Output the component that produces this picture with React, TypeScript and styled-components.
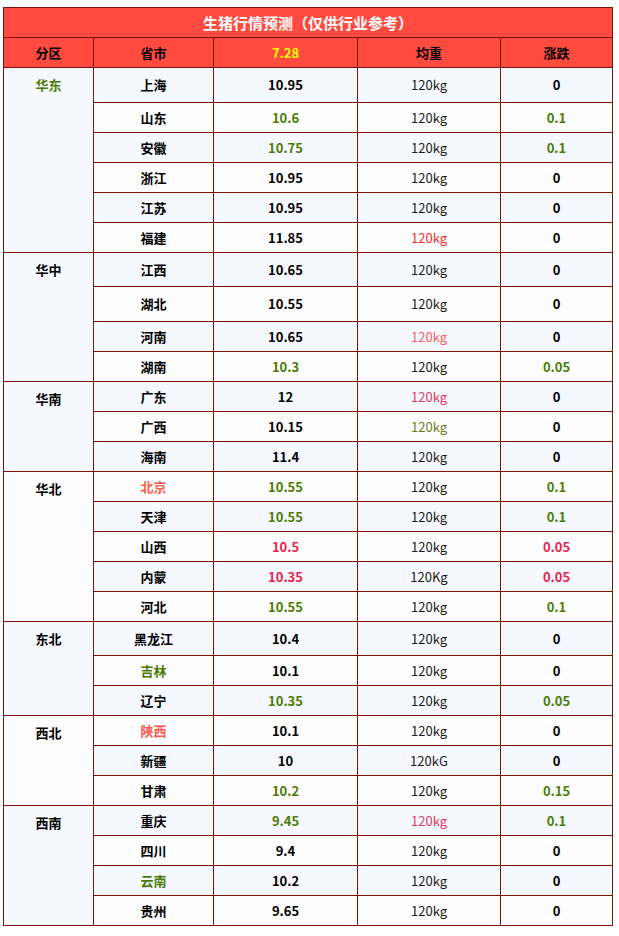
import React from 'react'
import styled, { createGlobalStyle } from 'styled-components'

const GREEN = '#4b7b05'
const CRIMSON = '#e0264e'
const CORAL = '#ff5a52'
const BRIGHT = '#ff2a2a'
const OLIVE = '#6e7a1c'

type Row = {
    p: string
    pc?: string
    price: string
    prc?: string
    w?: string
    wc?: string
    ch: string
    cc?: string
    h?: number
}

type Group = {
    name: string
    color?: string
    rows: Row[]
}

const groups: Group[] = [
    {
        name: '华东', color: GREEN, rows: [
            { p: '上海', price: '10.95', ch: '0', h: 35 },
            { p: '山东', price: '10.6', prc: GREEN, ch: '0.1', cc: GREEN },
            { p: '安徽', price: '10.75', prc: GREEN, ch: '0.1', cc: GREEN },
            { p: '浙江', price: '10.95', ch: '0' },
            { p: '江苏', price: '10.95', ch: '0' },
            { p: '福建', price: '11.85', wc: BRIGHT, ch: '0' },
        ]
    },
    {
        name: '华中', rows: [
            { p: '江西', price: '10.65', ch: '0', h: 34 },
            { p: '湖北', price: '10.55', ch: '0', h: 35 },
            { p: '河南', price: '10.65', wc: '#ff5c5c', ch: '0' },
            { p: '湖南', price: '10.3', prc: GREEN, ch: '0.05', cc: GREEN },
        ]
    },
    {
        name: '华南', rows: [
            { p: '广东', price: '12', wc: '#e8365c', ch: '0' },
            { p: '广西', price: '10.15', wc: OLIVE, ch: '0' },
            { p: '海南', price: '11.4', ch: '0' },
        ]
    },
    {
        name: '华北', rows: [
            { p: '北京', pc: CORAL, price: '10.55', prc: GREEN, ch: '0.1', cc: GREEN },
            { p: '天津', price: '10.55', prc: GREEN, ch: '0.1', cc: GREEN },
            { p: '山西', price: '10.5', prc: CRIMSON, ch: '0.05', cc: CRIMSON },
            { p: '内蒙', price: '10.35', prc: CRIMSON, w: '120Kg', ch: '0.05', cc: CRIMSON },
            { p: '河北', price: '10.55', prc: GREEN, ch: '0.1', cc: GREEN },
        ]
    },
    {
        name: '东北', rows: [
            { p: '黑龙江', price: '10.4', ch: '0', h: 34 },
            { p: '吉林', pc: GREEN, price: '10.1', ch: '0' },
            { p: '辽宁', price: '10.35', prc: GREEN, ch: '0.05', cc: GREEN },
        ]
    },
    {
        name: '西北', rows: [
            { p: '陕西', pc: CORAL, price: '10.1', ch: '0' },
            { p: '新疆', price: '10', w: '120kG', ch: '0' },
            { p: '甘肃', price: '10.2', prc: GREEN, ch: '0.15', cc: GREEN },
        ]
    },
    {
        name: '西南', rows: [
            { p: '重庆', price: '9.45', prc: GREEN, wc: '#e8365c', ch: '0.1', cc: GREEN },
            { p: '四川', price: '9.4', ch: '0' },
            { p: '云南', pc: GREEN, price: '10.2', ch: '0' },
            { p: '贵州', price: '9.65', ch: '0' },
        ]
    },
]

const App: React.FC = () => {
    let index = 0
    return (
        <Page>
            <GlobalStyle />
            <Table>
                <colgroup>
                    <col style={{ width: 90 }} />
                    <col style={{ width: 120 }} />
                    <col style={{ width: 144 }} />
                    <col style={{ width: 143 }} />
                    <col style={{ width: 112 }} />
                </colgroup>
                <thead>
                    <tr>
                        <Title colSpan={5}>生猪行情预测（仅供行业参考）</Title>
                    </tr>
                    <tr>
                        <Head>分区</Head>
                        <Head>省市</Head>
                        <Head $date>7.28</Head>
                        <Head>均重</Head>
                        <Head>涨跌</Head>
                    </tr>
                </thead>
                <tbody>
                    {groups.map(g => g.rows.map((r, i) => {
                        index += 1
                        return (
                            <BodyRow key={r.p} $alt={index % 2 === 0}>
                                {i === 0 && (
                                    <Region rowSpan={g.rows.length} $color={g.color}>{g.name}</Region>
                                )}
                                <Cell $h={r.h} $color={r.pc}>{r.p}</Cell>
                                <Cell $h={r.h} $color={r.prc}>{r.price}</Cell>
                                <Weight $h={r.h} $color={r.wc}>{r.w ?? '120kg'}</Weight>
                                <Cell $h={r.h} $color={r.cc}>{r.ch}</Cell>
                            </BodyRow>
                        )
                    }))}
                </tbody>
            </Table>
        </Page>
    )
}

const GlobalStyle = createGlobalStyle`
    body {
        margin: 0;
        background: #ffffff;
        font-family: "Noto Sans CJK SC", "Liberation Sans", sans-serif;
    }
`

const Page = styled.div`
    padding: 7px 0 0 3px;
`

const Table = styled.table`
    width: 610px;
    table-layout: fixed;
    border-collapse: collapse;
    border: 1px solid #7e1208;
`

const Title = styled.th`
    height: 29px;
    padding: 0;
    background: #ff4b3f;
    color: #ffffff;
    font-size: 15px;
    font-weight: 700;
    line-height: 18px;
    text-align: center;
    border: 1px solid #7e1208;
`

const Head = styled.th<{ $date?: boolean }>`
    height: 29px;
    padding: 0;
    background: #ff4b3f;
    color: ${p => p.$date ? '#ffff00' : '#000000'};
    font-size: 13px;
    font-weight: 700;
    line-height: 18px;
    text-align: center;
    border: 1px solid #7e1208;
`

const BodyRow = styled.tr<{ $alt: boolean }>`
    background: ${p => p.$alt ? '#fdfdfd' : '#f5f9ff'};
`

const Region = styled.td<{ $color?: string }>`
    padding: 8px 0 0;
    vertical-align: top;
    text-align: center;
    color: ${p => p.$color ?? '#000000'};
    font-size: 13px;
    font-weight: 700;
    line-height: 18px;
    border: 1px solid #7e1208;
`

const Cell = styled.td<{ $h?: number, $color?: string }>`
    height: ${p => (p.$h ?? 30) - 1}px;
    padding: 0;
    text-align: center;
    vertical-align: middle;
    color: ${p => p.$color ?? '#000000'};
    font-size: 13px;
    font-weight: 700;
    line-height: 18px;
    border: 1px solid #7e1208;
`

const Weight = styled(Cell)`
    font-weight: 400;
    color: ${p => p.$color ?? '#1a1a1a'};
`

export default App
